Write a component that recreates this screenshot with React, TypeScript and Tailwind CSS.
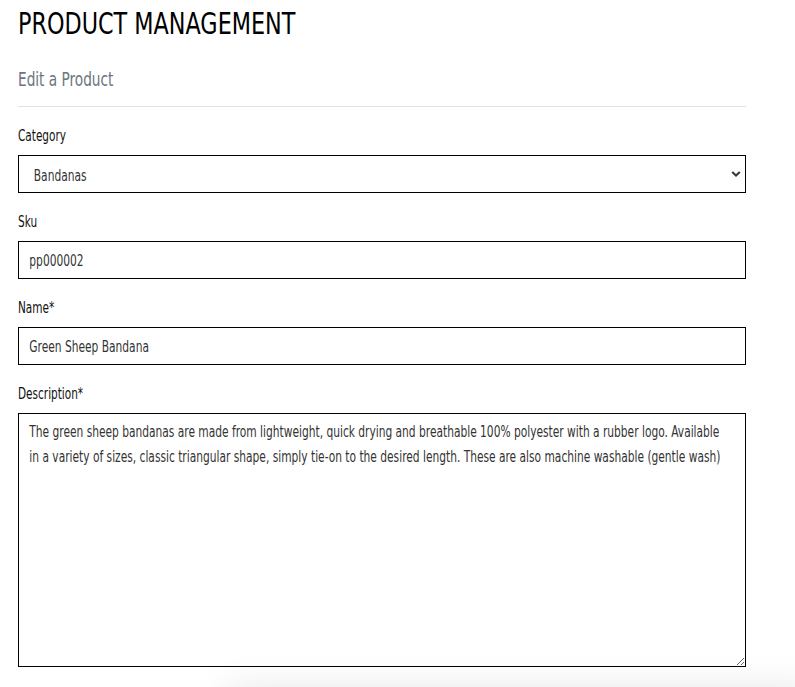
import { useState, type ReactNode } from 'react';

// The reference uses a tall condensed face; DejaVu Sans Condensed squeezed on x gets close.
const font = "font-['DejaVu_Sans_Condensed','DejaVu_Sans',sans-serif]";

function Narrow({ children, className = '' }: { children: ReactNode; className?: string }) {
  return <span className={`inline-block origin-left whitespace-nowrap ${className}`}>{children}</span>;
}

function Field({ label, children }: { label: string; children: ReactNode }) {
  return (
    <div className="mb-4">
      <label className="mb-[7px] block h-[25px] pt-px text-[16px] leading-6 text-[#111]">
        <Narrow className="scale-x-[0.73]">{label}</Narrow>
      </label>
      {children}
    </div>
  );
}

export default function App() {
  const [category, setCategory] = useState('bandanas');
  const [sku, setSku] = useState('pp000002');
  const [name, setName] = useState('Green Sheep Bandana');
  const [description, setDescription] = useState(
    'The green sheep bandanas are made from lightweight, quick drying and breathable 100% polyester with a rubber logo. Available in a variety of sizes, classic triangular shape, simply tie-on to the desired length. These are also machine washable (gentle wash)'
  );

  const boxClass = 'relative h-[38px] w-full overflow-hidden border border-black bg-white';
  const controlClass =
    'block h-[36px] w-[981px] origin-left scale-x-[0.74] bg-transparent text-[16px] text-[#333] outline-none';

  return (
    <div className={`min-h-screen overflow-hidden bg-white ${font}`}>
      <div className="ml-[18px] w-[728px]">
        <h1 className="mt-[4px] h-[38px] text-[31px] leading-[38px] uppercase text-black">
          <Narrow className="scale-x-[0.8]">Product Management</Narrow>
        </h1>
        <h2 className="mt-[25px] h-6 text-[20px] leading-6 text-[#6c757d]">
          <Narrow className="scale-x-[0.76]">Edit a Product</Narrow>
        </h2>
        <hr className="mt-[15px] mb-[16px] border-t border-[#e3e3e3]" />

        <form>
          <Field label="Category">
            <div className={boxClass}>
              <select
                value={category}
                onChange={(e) => setCategory(e.target.value)}
                className={`${controlClass} appearance-none pt-[4px] pl-[20px]`}
              >
                <option value="bandanas">Bandanas</option>
                <option value="collars">Collars</option>
                <option value="leads">Leads</option>
              </select>
              <svg
                className="pointer-events-none absolute top-1/2 right-[4px] -translate-y-1/2"
                width="10"
                height="7"
                viewBox="0 0 10 7"
              >
                <path d="M1.2 1.5 L5 5 L8.8 1.5" fill="none" stroke="#3a3a3a" strokeWidth="2.2" />
              </svg>
            </div>
          </Field>

          <Field label="Sku">
            <div className={boxClass}>
              <input value={sku} onChange={(e) => setSku(e.target.value)} className={`${controlClass} pl-[14px]`} />
            </div>
          </Field>

          <Field label="Name*">
            <div className={boxClass}>
              <input value={name} onChange={(e) => setName(e.target.value)} className={`${controlClass} pl-[14px]`} />
            </div>
          </Field>

          <Field label="Description*">
            <div className="h-[254px] w-full resize-y overflow-hidden border border-black bg-white">
              <textarea
                value={description}
                onChange={(e) => setDescription(e.target.value)}
                className="block h-full w-[981px] origin-left scale-x-[0.74] resize-none bg-transparent pt-[5px] pr-[24px] pl-[14px] text-[16px] leading-[25px] text-[#333] outline-none"
              />
            </div>
          </Field>
        </form>
      </div>

      <div className="fixed top-[692px] right-[-20px] left-[226px] h-24 rounded-md bg-white shadow-[0_0_40px_rgba(0,0,0,0.12)]" />
    </div>
  );
}
